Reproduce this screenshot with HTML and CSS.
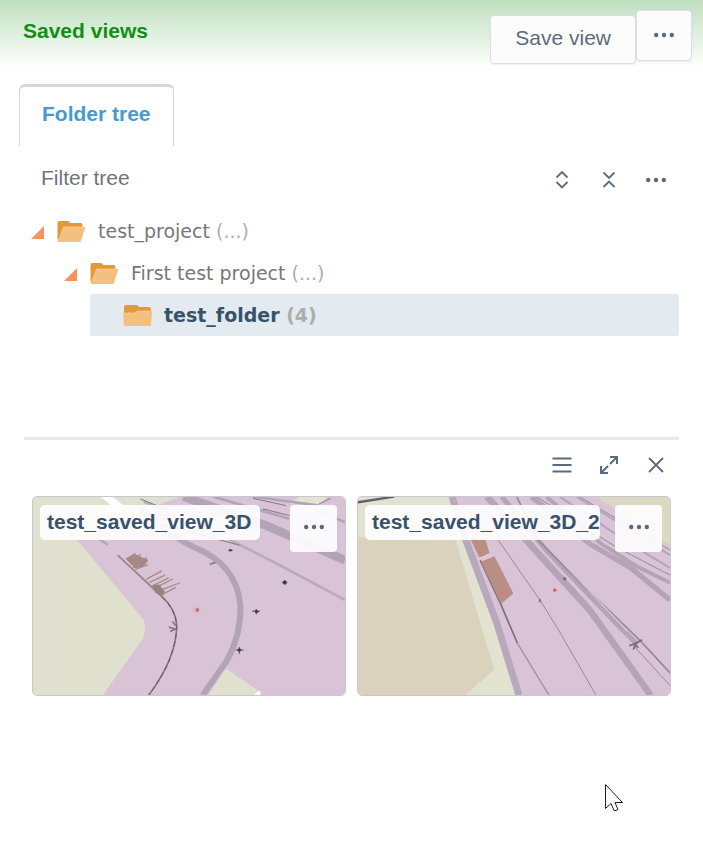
FILE: index.html
```html
<!DOCTYPE html>
<html lang="en">
<head>
  <meta charset="UTF-8">
  <meta name="viewport" content="width=device-width, initial-scale=1.0">
  <title>Saved views</title>
  <link rel="stylesheet" href="styles.css">
</head>
<body>
  <!-- shared icons -->
  <svg class="sprite" aria-hidden="true">
    <symbol id="icon-more" viewBox="0 0 20 20">
      <circle cx="2.200" cy="10" r="2.200"/><circle cx="10" cy="10" r="2.200"/><circle cx="17.800" cy="10" r="2.200"/>
    </symbol>
    <symbol id="icon-folder-open" viewBox="0 0 28 21">
      <path fill="#e39a35" d="M0 2Q0 0 2 0H11L13 2H23Q25 2 25 4V8L20 20H1L0 18Z"/>
      <path fill="#f4c080" d="M6 6H28L23 21H0Z"/>
      <path fill="none" stroke="#f9dcb8" stroke-dasharray="1 1" d="M1 19L6 6H27"/>
    </symbol>
    <symbol id="icon-folder" viewBox="0 0 29 21">
      <path fill="#e39a35" d="M1 3Q1 0 3 0H14L16 2H26Q28 2 28 4V10H1Z"/>
      <path fill="#f4c080" d="M0 8H11L15 6H29L28 21H1Z"/>
      <path fill="none" stroke="#f9dcb8" stroke-dasharray="1 1" d="M1 8H11L15 6H28"/>
    </symbol>
  </svg>

  <header class="header">
    <h1 class="title">Saved views</h1>
    <button class="btn btn-save" type="button">Save view</button>
    <button class="btn btn-more" type="button" aria-label="More"><svg class="icon"><use href="#icon-more"/></svg></button>
  </header>

  <nav class="tabs">
    <button class="tab" type="button">Folder tree</button>
  </nav>

  <main class="content">
    <div class="toolbar">
      <input class="filter" type="text" placeholder="Filter tree" aria-label="Filter tree">
      <button class="icon-btn" type="button" aria-label="Expand all">
        <svg class="icon line" viewBox="0 0 20 20"><path d="M4.500 7.500L10 2L15.500 7.500M4.500 12L10 17.500L15.500 12"/></svg>
      </button>
      <button class="icon-btn" type="button" aria-label="Collapse all">
        <svg class="icon line" viewBox="0 0 20 20"><path d="M4.500 2.500L10 8L15.500 2.500M4.500 17L10 11.500L15.500 17"/></svg>
      </button>
      <button class="icon-btn" type="button" aria-label="More"><svg class="icon"><use href="#icon-more"/></svg></button>
    </div>

    <ul class="tree">
      <li>
        <div class="node">
          <button class="toggle" type="button" aria-label="Collapse test_project"></button>
          <svg class="folder"><use href="#icon-folder-open"/></svg>
          <span>test_project <span class="count">(...)</span></span>
        </div>
        <ul>
          <li>
            <div class="node">
              <button class="toggle" type="button" aria-label="Collapse First test project"></button>
              <svg class="folder"><use href="#icon-folder-open"/></svg>
              <span>First test project <span class="count">(...)</span></span>
            </div>
            <ul>
              <li>
                <div class="node leaf selected">
                  <svg class="folder"><use href="#icon-folder"/></svg>
                  <span>test_folder <span class="count">(4)</span></span>
                </div>
              </li>
            </ul>
          </li>
        </ul>
      </li>
    </ul>

    <section class="views">
      <div class="toolbar view-tools">
        <button class="icon-btn" type="button" aria-label="List">
          <svg class="icon line" viewBox="0 0 20 20"><path d="M.5 3.500H19.500M.5 10H19.500M.5 16.500H19.500"/></svg>
        </button>
        <button class="icon-btn" type="button" aria-label="Enlarge">
          <svg class="icon line enlarge" viewBox="0 0 20 20"><path d="M11 2H18V9M17.500 2.500L11 9M2 11V18H9M2.500 17.500L9 11"/></svg>
        </button>
        <button class="icon-btn" type="button" aria-label="Close">
          <svg class="icon line" viewBox="0 0 20 20"><path d="M3 3L17 17M17 3L3 17"/></svg>
        </button>
      </div>

      <div class="cards">
        <article class="card">
          <svg class="map" viewBox="36 33 942 600" preserveAspectRatio="xMidYMid slice" aria-hidden="true">
            <rect x="36" y="33" width="942" height="600" fill="#d8c4d6"/>
            <path fill="#e0e0ce" d="M36 33H480L370 75L170 165L370 405Q380 430 368 462L246 633H36Z"/>
            <path fill="#e0e0ce" d="M618 552L725 625V633H565Z"/>
            <path fill="#fff" d="M240 33H275L310 60L275 62Z"/>
            <path fill="#e3e4cf" d="M810 55L840 33H925L900 60Z"/>
            <path fill="#fff" d="M705 628L722 618V633H708Z"/>
            <g fill="none" stroke="#b3a4b5">
              <path stroke-width="26" d="M490 33L740 120L978 225"/>
              <path stroke-width="8" d="M580 33L810 100M890 75L978 110M700 33L900 60"/>
              <path stroke-width="18" d="M360 70Q410 125 520 185Q650 235 662 360Q665 450 620 530L548 633"/>
              <path stroke-width="8" stroke="#bcabbd" d="M370 48L640 168L800 250L978 345"/>
              <path stroke-width="3" stroke="#817681" d="M360 40L440 72M420 115L660 180M700 38L800 60M730 70L810 90M900 55L935 38"/>
              <path stroke-width="7" d="M225 155L263 178"/>
            </g>
            <path fill="none" stroke="#8b7785" stroke-width="5" d="M292 210L425 335Q465 370 470 420Q470 520 385 633"/>
            <path fill="none" stroke="#62545e" stroke-width="3" stroke-dasharray="16 9" d="M425 335Q465 370 470 420Q470 520 385 633"/>
            <path fill="#a78883" d="M315 220L345 207L384 225L370 244L345 250Z"/>
            <g fill="none" stroke="#a58a8b" stroke-width="4">
              <path d="M292 210L425 333M318 222L345 204M326 231L362 207M332 238L380 217M338 247L384 224M345 253L384 238M377 283L425 257M388 292L435 270M397 302L445 278M402 310L459 281M410 320L480 293M420 332L467 307"/>
            </g>
            <path fill="#9d807e" d="M396 300L417 298L434 320L424 335L405 322Z"/>
            <path fill="none" stroke="#8a747e" stroke-width="5" d="M446 427L466 433L450 440M457 410L467 423M570 237L587 232"/>
            <circle cx="532" cy="375" r="14" fill="#dfbdca"/>
            <circle cx="532" cy="375" r="6" fill="#b9797f"/>
            <path stroke="#776b7c" stroke-width="4" d="M626 195H639M787 292H804M796 285V300M698 379H721M710 372V389M648 496H671M659 487V508"/>
            <g fill="#3f3946"><circle cx="632" cy="195" r="4"/><circle cx="796" cy="292" r="6"/><circle cx="711" cy="380" r="5"/><circle cx="659" cy="496" r="5"/></g>
          </svg>
          <div class="card-head">
            <h2 class="card-title">test_saved_view_3D</h2>
            <button class="card-more" type="button" aria-label="More"><svg class="icon"><use href="#icon-more"/></svg></button>
          </div>
        </article>

        <article class="card">
          <svg class="map" viewBox="21 33 942 600" preserveAspectRatio="xMidYMid slice" aria-hidden="true">
            <rect x="21" y="33" width="942" height="600" fill="#d8c4d6"/>
            <path fill="#e1e2cf" d="M21 33H312L505 633H21Z"/>
            <path fill="#dad2bd" d="M21 155L315 163L432 555L345 633H21Z"/>
            <path fill="#ddd8c1" d="M740 33H963V180L850 105Z"/>
            <path fill="none" stroke="#655e67" stroke-width="7" d="M21 50L130 33"/>
            <path fill="none" stroke="#b7a8bb" stroke-width="21" d="M305 33L345 160L440 415L507 633"/>
            <g fill="none" stroke="#b3a4b6">
              <path stroke-width="20" d="M410 33L520 155L720 375L905 633"/>
              <path stroke-width="15" d="M455 33L590 195L800 415L860 475"/>
              <path stroke-width="16" d="M545 33L720 175L845 248L963 345"/>
              <path stroke-width="12" d="M590 33L755 175L865 245L963 293"/>
              <path stroke-width="6" d="M680 33L790 100L963 210M630 33L850 180L963 248"/>
            </g>
            <g fill="none" stroke="#978999" stroke-width="3">
              <path d="M445 165L570 345L625 433L740 633M690 33L760 75L963 194M560 33L800 185L963 270"/>
              <path stroke-width="5" d="M500 33L565 165L690 290L875 470L963 565"/>
              <path d="M850 480L963 603"/>
              <path stroke="#d8c4d6" stroke-width="4" d="M590 180L835 440M760 170L963 278"/>
            </g>
            <path fill="none" stroke="#806d7b" stroke-width="5" d="M390 225L453 360L502 475"/>
            <path fill="none" stroke="#a28fa0" stroke-width="4" d="M502 475L598 633"/>
            <path fill="#b98e85" d="M360 160H405L418 203L388 218ZM392 229L433 213L490 325L453 357Z"/>
            <path fill="none" stroke="#dfc8d4" stroke-width="5" d="M382 221L421 207M398 224L430 209"/>
            <g fill="#ef7547"><circle cx="387" cy="200" r="3"/><circle cx="423" cy="247" r="3"/><circle cx="430" cy="270" r="3"/><circle cx="459" cy="322" r="4"/></g>
            <circle cx="615" cy="315" r="9" fill="#e4bcc7"/><circle cx="615" cy="315" r="5" fill="#c5575d"/>
            <circle cx="645" cy="281" r="5" fill="#7b6a7d"/>
            <path fill="none" stroke="#766877" stroke-width="5" d="M840 483L861 475L852 495M858 478L878 465M859 480L867 490M570 342V352"/>
          </svg>
          <div class="card-head">
            <h2 class="card-title">test_saved_view_3D_2</h2>
            <button class="card-more" type="button" aria-label="More"><svg class="icon"><use href="#icon-more"/></svg></button>
          </div>
        </article>
      </div>
    </section>
  </main>

  <svg class="cursor" viewBox="0 0 19 28" aria-hidden="true">
    <path fill="#fff" stroke="#1c1c2c" d="M.5.5V24.500L6 19.500L9 26.500Q11 27 13 25.500L10 18.500H17.500Z"/>
  </svg>
</body>
</html>
```
FILE: styles.css
```css
* {
  box-sizing: border-box;
}
body {
  margin: 0;
  background: #fff;
  color: #5b6b7b;
  font-family: "Liberation Sans", Arial, sans-serif;
  font-size: 21px;
  line-height: 24px;
}
button, input {
  font: inherit;
  color: inherit;
  padding: 0;
  border: 0;
  background: none;
}
button {
  cursor: pointer;
}
ul {
  list-style: none;
  margin: 0;
  padding: 0;
}
.sprite {
  display: none;
}
.icon {
  display: block;
  width: 20px;
  height: 20px;
  fill: #5b6b7b;
}
.line {
  fill: none;
  stroke: #5b6b7b;
  stroke-width: 1.8;
}
.enlarge {
  stroke-width: 2;
}

/* header */
.header {
  display: flex;
  align-items: flex-start;
  height: 84px;
  padding: 10px 11px 0 23px;
  background: linear-gradient(#bfdfbf, #fff 68px);
}
.title {
  flex: 1;
  margin: 9px 0 0;
  font-size: 21px;
  line-height: 24px;
  color: #128f12;
}
.btn {
  display: flex;
  align-items: center;
  justify-content: center;
  border: 1px solid #d9dfe4;
  border-radius: 4px;
  background: #fcfcfc;
  box-shadow: 0 1px 2px rgba(0, 0, 0, 0.06);
}
.btn-save {
  height: 49px;
  margin-top: 5px;
  padding: 0 24px 4px;
}
.btn-more {
  width: 56px;
  height: 51px;
  padding-bottom: 2px;
}

/* tabs */
.tabs {
  padding: 0 19px;
}
.tab {
  height: 62px;
  padding: 0 22px 6px;
  border: 1px solid #d3d7dc;
  border-top-width: 3px;
  border-bottom: 0;
  border-radius: 6px 6px 0 0;
  font-weight: bold;
  color: #4799d0;
}

.content {
  padding: 8px 24px;
}
.toolbar {
  display: flex;
  align-items: center;
  height: 52px;
}
.filter {
  flex: 1;
  min-width: 0;
  padding: 0 17px 4px;
}
.filter::placeholder {
  color: #6c757d;
  opacity: 1;
}
.icon-btn {
  display: flex;
  align-items: center;
  justify-content: center;
  width: 47px;
  height: 47px;
}

/* tree */
.tree {
  min-height: 231px;
  padding-top: 4px;
  font-family: "DejaVu Sans", Verdana, sans-serif;
  font-size: 19px;
  color: #777;
}
.tree ul {
  padding-left: 33px;
}
.node {
  display: flex;
  align-items: center;
  height: 42px;
  padding-left: 7px;
  white-space: nowrap;
}
.leaf {
  padding-left: 33px;
}
.selected {
  border-radius: 3px;
  background: #e3eaf0;
  font-weight: bold;
  color: #37536b;
}
.toggle {
  width: 13px;
  height: 13px;
  margin: 3px 13px 0 0;
  background: #f49462;
  clip-path: polygon(100% 0, 100% 100%, 0 100%);
}
.folder {
  width: 29px;
  height: 21px;
  margin-right: 12px;
}
.count {
  color: #adadad;
}

/* saved views */
.views {
  border-top: 3px solid #eaeaea;
}
.view-tools {
  justify-content: flex-end;
  height: 49px;
}
.cards {
  display: grid;
  grid-template-columns: 1fr 1fr;
  gap: 11px;
  padding: 7px 8px;
}
.card {
  position: relative;
  height: 200px;
  overflow: hidden;
  border: 1px solid #c8c8cc;
  border-radius: 5px;
}
.map {
  display: block;
  width: 100%;
  height: 100%;
}
.card-head {
  position: absolute;
  inset: 0 0 auto;
  display: flex;
  align-items: flex-start;
  justify-content: space-between;
  gap: 15px;
  padding: 8px 8px 0 7px;
}
.card-title {
  min-width: 0;
  height: 35px;
  margin: 0;
  padding: 0 9px 0 7px;
  border-radius: 5px;
  background: rgba(255, 255, 255, 0.9);
  font-size: 21px;
  line-height: 34px;
  white-space: nowrap;
  color: #37536b;
}
.card-more {
  display: flex;
  flex: none;
  align-items: center;
  justify-content: center;
  width: 47px;
  height: 47px;
  padding-bottom: 4px;
  border-radius: 4px;
  background: rgba(255, 255, 255, 0.9);
}

/* pointer */
.cursor {
  position: absolute;
  left: 605px;
  top: 784px;
  width: 19px;
  height: 28px;
}
```
